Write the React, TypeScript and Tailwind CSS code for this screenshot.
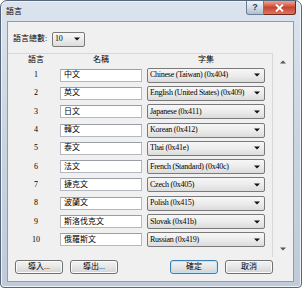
import React from "react";

const rows: [string, string][] = [
  ["中文", "Chinese (Taiwan) (0x404)"],
  ["英文", "English (United States) (0x409)"],
  ["日文", "Japanese (0x411)"],
  ["韓文", "Korean (0x412)"],
  ["泰文", "Thai (0x41e)"],
  ["法文", "French (Standard) (0x40c)"],
  ["捷克文", "Czech (0x405)"],
  ["波蘭文", "Polish (0x415)"],
  ["斯洛伐克文", "Slovak (0x41b)"],
  ["俄羅斯文", "Russian (0x419)"],
];

const FONT = { fontFamily: '"Liberation Serif", "Noto Sans CJK TC", serif' };

function DownTri({ color = "#111" }: { color?: string }) {
  return (
    <svg width="6" height="4" viewBox="0 0 6 4" className="block shrink-0">
      <path d="M0 0.5 H6 L3 3.5 Z" fill={color} />
    </svg>
  );
}

function UpTri({ color = "#555" }: { color?: string }) {
  return (
    <svg width="6" height="4" viewBox="0 0 6 4" className="block">
      <path d="M0 3.5 H6 L3 0.5 Z" fill={color} />
    </svg>
  );
}

function Combo({ text, w }: { text: string; w: string }) {
  return (
    <div
      className={`${w} h-[15px] flex items-center rounded-[2px] border border-[#7a7a7a] bg-gradient-to-b from-[#f7f7f7] via-[#ececec] to-[#dcdcdc] pl-[2px] pr-[4px]`}
    >
      <span className="flex-1 text-[8px] leading-[10px] tracking-[-0.25px] whitespace-nowrap overflow-hidden text-black">
        {text}
      </span>
      <DownTri />
    </div>
  );
}

function Btn({ label, def = false }: { label: string; def?: boolean }) {
  return (
    <div
      className={`w-[48px] h-[14px] flex items-center justify-center rounded-[3px] border ${
        def
          ? "border-[#3c7fb1] shadow-[inset_0_0_0_1px_#bfe4f7]"
          : "border-[#707070] shadow-[inset_0_0_0_1px_#fbfbfb]"
      } bg-gradient-to-b from-[#f3f3f3] via-[#e6e6e6] to-[#d2d2d2] text-[8px] leading-[10px] text-black`}
    >
      {label}
    </div>
  );
}

export default function App() {
  return (
    <div className="w-[306px] h-[291px] bg-white" style={FONT}>
      <div className="w-[302px] h-[288px] flex flex-col rounded-t-[7px] rounded-b-[4px] border border-[#56677b] bg-gradient-to-b from-[#dbe4ee] via-[#c9d4e1] to-[#bfcbd9] shadow-[inset_0_0_0_1px_#eef3f8]">
        {/* title bar */}
        <div className="h-[20px] shrink-0 flex items-start">
          <span className="pl-[5px] pt-[6px] text-[8px] leading-[10px] text-black">語言</span>
          <div className="flex-1" />
          <div className="flex mr-[5px]">
            <div className="w-[18px] h-[14px] flex items-center justify-center rounded-bl-[3px] border border-t-0 border-[#6d7c8f] bg-gradient-to-b from-[#eef3f8] via-[#d3dde8] to-[#aebfd2] text-[9px] leading-[9px] font-bold text-[#2f3e52]" style={{ fontFamily: '"Liberation Sans", sans-serif' }}>
              ?
            </div>
            <div className="w-[32px] h-[14px] flex items-center justify-center rounded-br-[3px] border border-t-0 border-l-0 border-[#6b2a1f] bg-gradient-to-b from-[#eaa595] via-[#c8442f] to-[#dc7560]">
              <svg width="9" height="8" viewBox="0 0 9 8">
                <path d="M1 0.5 L8 7.5 M8 0.5 L1 7.5" stroke="#fff" strokeWidth="1.8" fill="none" />
              </svg>
            </div>
          </div>
        </div>

        {/* client area */}
        <div className="flex-1 ml-[6px] mr-[7px] mb-[5px] border border-[#8d9db1] bg-[#f0f0f0] flex flex-col pt-[10px] pb-[7px]">
          {/* count row */}
          <div className="h-[14px] flex items-center pl-[5px]">
            <span className="w-[39px] text-[8px] leading-[10px] text-black whitespace-nowrap">語言總數:</span>
            <Combo text="10" w="w-[33px]" />
          </div>

          {/* list panel */}
          <div className="mt-[7px] h-[204px] flex">
            <div className="w-[265px] border-t border-r border-[#d8d8d8] flex flex-col">
              <div className="h-[12px] flex items-center text-[8px] leading-[10px] text-black">
                <div className="w-[40px] ml-[8px] text-center">語言</div>
                <div className="w-[82px] ml-[4px] text-center">名稱</div>
                <div className="w-[118px] ml-[5px] text-center">字集</div>
              </div>
              {rows.map(([name, cs], i) => (
                <div key={i} className="h-[18.3px] flex items-center">
                  <div className="w-[40px] ml-[8px] text-center text-[8px] leading-[10px] text-black">{i + 1}</div>
                  <div className="w-[82px] ml-[4px] h-[13px] flex items-center bg-white border border-[#b5b9bf] border-t-[#9a9ea5] pl-[3px] text-[8px] leading-[10px] text-black">
                    {name}
                  </div>
                  <div className="ml-[5px]">
                    <Combo text={cs} w="w-[118px]" />
                  </div>
                </div>
              ))}
            </div>
            <div className="w-[20px] flex flex-col justify-between">
              <div className="h-[17px] flex items-center justify-center">
                <UpTri />
              </div>
              <div className="h-[17px] flex items-center justify-center">
                <DownTri color="#555" />
              </div>
            </div>
          </div>

          {/* buttons */}
          <div className="mt-[3px] flex items-center pl-[7px] pr-[20px]">
            <Btn label="導入..." />
            <div className="ml-[7px]">
              <Btn label="導出..." />
            </div>
            <div className="flex-1" />
            <Btn label="確定" def />
            <div className="ml-[7px]">
              <Btn label="取消" />
            </div>
          </div>
        </div>
      </div>
    </div>
  );
}
